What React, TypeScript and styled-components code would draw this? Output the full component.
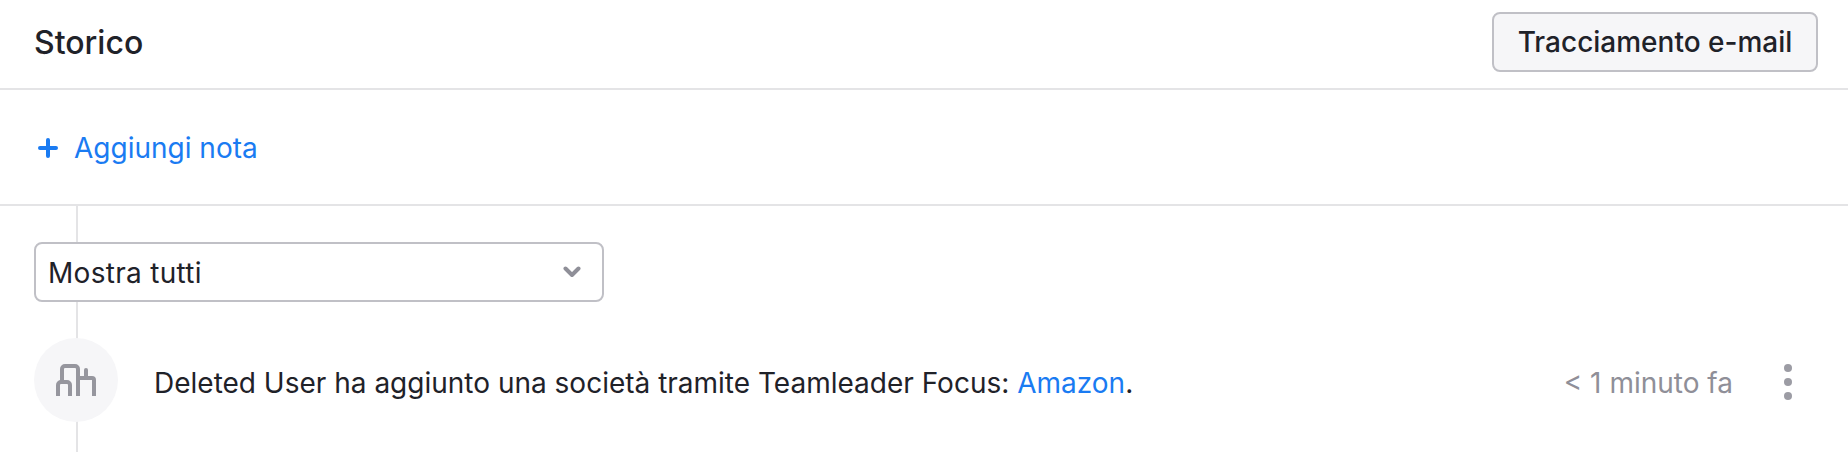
import React from "react";
import styled, { createGlobalStyle } from "styled-components";

const Global = createGlobalStyle`
  html, body { margin: 0; padding: 0; background: #fff; }
  body { font-family: Inter, "Liberation Sans", sans-serif; color: #1f2229; }
  * { box-sizing: border-box; }
`;
const Page = styled.div`
  width: 1848px;
  height: 452px;
  overflow: hidden;
  background: #fff;
`;
const Header = styled.header`
  height: 90px;
  border-bottom: 2px solid #e4e4e6;
  padding: 12px 30px 0 34px;
  display: flex;
  justify-content: space-between;
  align-items: flex-start;
`;
const Title = styled.h2`
  margin: 0;
  font-size: 32px;
  line-height: 62px;
  font-weight: 450;
  color: #1f2229;
`;
const TrackButton = styled.button`
  width: 326px;
  height: 60px;
  border: 2px solid #c0c0c6;
  border-radius: 8px;
  background: #f6f6f8;
  font: 450 28px Inter, sans-serif;
  color: #1f2229;
  padding: 0;
`;
const NoteBar = styled.div`
  height: 116px;
  border-bottom: 2px solid #e4e4e6;
  padding: 2px 0 0 38px;
  display: flex;
  align-items: center;
  gap: 16px;
  color: #1a7bf2;
  font-size: 28px;
`;
const Timeline = styled.section`
  position: relative;
  height: 246px;
  padding: 36px 0 0 34px;
`;
const Rail = styled.div`
  position: absolute;
  left: 76px;
  top: 0;
  bottom: 0;
  width: 2px;
  background: #e4e4e6;
`;
const Select = styled.div`
  position: relative;
  width: 570px;
  height: 60px;
  border: 2px solid #c0c0c6;
  border-radius: 8px;
  background: #fff;
  padding: 0 21px 0 12px;
  display: flex;
  align-items: center;
  justify-content: space-between;
  font-size: 28px;
`;
const SelectValue = styled.span`
  letter-spacing: 0.3px;
  padding-top: 2px;
`;
const EventRow = styled.div`
  position: relative;
  margin-top: 36px;
  height: 84px;
  display: flex;
  align-items: center;
  font-size: 28px;
`;
const Avatar = styled.div`
  width: 84px;
  height: 84px;
  border-radius: 50%;
  background: #f6f6f8;
  display: flex;
  align-items: center;
  justify-content: center;
  flex: none;
`;
const Message = styled.div`
  margin-left: 36px;
  padding-top: 6px;
  flex: 1;
  color: #1f2229;
`;
const Link = styled.span`
  color: #1a7bf2;
`;
const Time = styled.div`
  color: #8f8f98;
  padding-top: 6px;
  margin-right: 51px;
`;
const Menu = styled.div`
  display: flex;
  flex-direction: column;
  gap: 6px;
  margin-right: 56px;
  padding-top: 4px;
`;
const Dot = styled.span`
  width: 8px;
  height: 8px;
  border-radius: 50%;
  background: #9c9ca4;
`;

export default function App() {
  return (
    <Page>
      <Global />
      <Header>
        <Title>Storico</Title>
        <TrackButton>Tracciamento e-mail</TrackButton>
      </Header>
      <NoteBar>
        <svg width="20" height="20" viewBox="0 0 20 20">
          <path d="M10 2v16M2 10h16" stroke="#1a7bf2" strokeWidth="4" strokeLinecap="round" />
        </svg>
        Aggiungi nota
      </NoteBar>
      <Timeline>
        <Rail />
        <Select>
          <SelectValue>Mostra tutti</SelectValue>
          <svg width="18" height="12" viewBox="0 0 18 12">
            <path d="M2.5 2.5 9 9l6.5-6.5" fill="none" stroke="#8f8f98" strokeWidth="4" strokeLinecap="round" strokeLinejoin="round" />
          </svg>
        </Select>
        <EventRow>
          <Avatar>
            <svg width="40" height="32" viewBox="0 0 40 32" fill="none" stroke="#96969e" strokeWidth="4">
              <path d="M2 32V21a3 3 0 0 1 3-3h6a3 3 0 0 1 3 3v11" />
              <path d="M6 17V5a3 3 0 0 1 3-3h10a3 3 0 0 1 3 3v27" />
              <path d="M22 14h14a2 2 0 0 1 2 2v16" />
              <path d="M30 14V6" strokeLinecap="round" />
            </svg>
          </Avatar>
          <Message>
            Deleted User ha aggiunto una società tramite Teamleader Focus: <Link>Amazon</Link>.
          </Message>
          <Time>&lt; 1 minuto fa</Time>
          <Menu>
            <Dot />
            <Dot />
            <Dot />
          </Menu>
        </EventRow>
      </Timeline>
    </Page>
  );
}
